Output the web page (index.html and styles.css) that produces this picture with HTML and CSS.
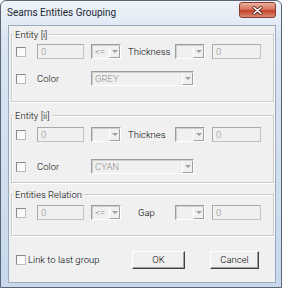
FILE: index.html
```html
<!DOCTYPE html>
<html lang="en">
<head>
    <meta charset="UTF-8">
    <title>Seams Entities Grouping</title>
    <link rel="stylesheet" href="styles.css">
</head>
<body>
    <div class="window">
        <div class="titlebar">
            <span class="title">Seams Entities Grouping</span>
            <span class="close">
                <svg width="11" height="9" viewBox="0 0 11 9">
                    <path d="M2 1.5 L9 7.5 M9 1.5 L2 7.5" stroke="#5a2a22" stroke-width="3" stroke-linecap="round"/>
                    <path d="M2 1.5 L9 7.5 M9 1.5 L2 7.5" stroke="#fff" stroke-width="1.6" stroke-linecap="round"/>
                </svg>
            </span>
        </div>
        <div class="client">
            <fieldset class="group group-a">
                <legend>Entity [i]</legend>
                <div class="rows">
                    <span class="check"></span>
                    <span class="edit">0</span>
                    <span class="combo"><span class="combo-text">&lt;=</span><span class="drop"></span></span>
                    <span class="label">Thickness</span>
                    <span class="combo"><span class="combo-text"></span><span class="drop"></span></span>
                    <span class="edit edit-wide">0</span>

                    <span class="check"></span>
                    <span class="label">Color</span>
                    <span class="combo combo-long"><span class="combo-text">GREY</span><span class="drop"></span></span>
                </div>
            </fieldset>

            <fieldset class="group group-b">
                <legend>Entity [ii]</legend>
                <div class="rows">
                    <span class="check"></span>
                    <span class="edit">0</span>
                    <span class="combo"><span class="combo-text"></span><span class="drop"></span></span>
                    <span class="label">Thicknes</span>
                    <span class="combo"><span class="combo-text"></span><span class="drop"></span></span>
                    <span class="edit edit-wide">0</span>

                    <span class="check"></span>
                    <span class="label">Color</span>
                    <span class="combo combo-long"><span class="combo-text">CYAN</span><span class="drop"></span></span>
                </div>
            </fieldset>

            <fieldset class="group group-c">
                <legend>Entities Relation</legend>
                <div class="rows">
                    <span class="check"></span>
                    <span class="edit">0</span>
                    <span class="combo"><span class="combo-text">&lt;=</span><span class="drop"></span></span>
                    <span class="label label-gap">Gap</span>
                    <span class="combo"><span class="combo-text"></span><span class="drop"></span></span>
                    <span class="edit edit-wide">0</span>
                </div>
            </fieldset>

            <div class="footer">
                <div class="link">
                    <span class="check"></span>
                    <span class="link-text">Link to last group</span>
                </div>
                <span class="button button-ok">OK</span>
                <span class="button button-cancel">Cancel</span>
            </div>
        </div>
    </div>
</body>
</html>
```

FILE: styles.css
```css
body {
    margin: 0;
    background-color: #ffffff;
    font-family: Roboto, "Liberation Sans", Arial, sans-serif;
    font-size: 9.5px;
    font-weight: 300;
    line-height: 11px;
    color: #000;
}
.window {
    box-sizing: border-box;
    width: 282px;
    height: 288px;
    display: flex;
    flex-direction: column;
    border: 1px solid #596775;
    border-radius: 6px 6px 0 0;
    background: linear-gradient(#eef3f9, #d9e5f2 40px, #c8d9ed);
}
.titlebar {
    height: 24px;
    display: flex;
    align-items: center;
    padding: 0 5px 0 6px;
}
.title {
    font-size: 10px;
    line-height: 12px;
    font-weight: 400;
    color: #1e2833;
}
.close {
    margin-left: auto;
    align-self: flex-start;
    margin-top: 1px;
    box-sizing: border-box;
    width: 37px;
    height: 16px;
    display: flex;
    align-items: center;
    justify-content: center;
    border: 1px solid #8a3a2c;
    border-radius: 3px;
    background: linear-gradient(#eab0a2, #d8735c 45%, #c2412a 55%, #dc8c74);
}
.client {
    flex: 1;
    margin: 0 5px 4px 7px;
    padding: 0 1px 0 2px;
    border: 1px solid #9aaabc;
    background-color: #f0f0f0;
}
.group {
    margin: 0;
    border: 1px solid #cbcbcb;
    box-shadow: 1px 1px 0 #fff, inset 1px 1px 0 #fff;
}
.group legend {
    margin-left: -3px;
    padding: 0 2px;
    height: 11px;
    line-height: 11px;
    background-color: #f0f0f0;
}
.group-a {
    margin-top: 3px;
    padding: 4px 0 15px 4px;
}
.group-b {
    margin-top: 8px;
    padding: 6px 0 8px 4px;
}
.group-c {
    margin-top: 6px;
    padding: 5px 0 15px 4px;
}
.rows {
    display: grid;
    grid-template-columns: 21px 54px 37px 47px 37px 49px;
    grid-auto-rows: 15px;
    align-items: start;
}
.group-a .rows {
    row-gap: 12px;
}
.group-b .rows {
    row-gap: 17px;
}
.label {
    height: 15px;
    line-height: 15px;
}
.check {
    box-sizing: border-box;
    width: 10px;
    height: 10px;
    border: 1px solid #8a8a8a;
    border-right-color: #bdbdbd;
    border-bottom-color: #bdbdbd;
    background: linear-gradient(135deg, #f4f4f4, #ffffff);
}
.rows .check {
    margin-top: 3px;
}
.edit {
    box-sizing: border-box;
    width: 47px;
    height: 15px;
    padding-left: 3px;
    line-height: 13px;
    color: #8c8c8c;
    border: 1px solid #c2c2c2;
    border-top-color: #a9a9a9;
    border-left-color: #a9a9a9;
}
.edit-wide {
    width: 49px;
}
.label-gap {
    margin-left: 10px;
}
.combo {
    box-sizing: border-box;
    width: 30px;
    height: 15px;
    display: flex;
    border: 1px solid #fff;
    border-top-color: #9c9c9c;
    border-left-color: #9c9c9c;
    box-shadow: inset 1px 1px 0 #d0d0d0;
}
.combo-long {
    grid-column: 3 / 6;
    width: 103px;
}
.combo-text {
    flex: 1;
    padding-left: 3px;
    line-height: 13px;
    color: #8c8c8c;
}
.drop {
    box-sizing: border-box;
    width: 11px;
    height: 12px;
    margin: 1px 0 0;
    display: flex;
    align-items: center;
    justify-content: center;
    border-left: 1px solid #fff;
    border-right: 1px solid #a0a0a0;
    border-bottom: 1px solid #a0a0a0;
    background-color: #f0f0f0;
}
.drop::after {
    content: "";
    border-left: 3px solid transparent;
    border-right: 3px solid transparent;
    border-top: 3px solid #a0a0a0;
}
.footer {
    display: flex;
    align-items: flex-start;
    height: 18px;
    margin-top: 15px;
    padding-left: 5px;
}
.link {
    margin-top: 3px;
    width: 116px;
    height: 12px;
    display: flex;
    align-items: flex-start;
}
.link .check {
    margin-top: 1px;
}
.link-text {
    margin-left: 2px;
    line-height: 12px;
}
.button {
    box-sizing: border-box;
    height: 18px;
    line-height: 16px;
    text-align: center;
    border: 1px solid #fff;
    border-right-color: #404040;
    border-bottom-color: #404040;
    box-shadow: inset -1px -1px 0 #a0a0a0;
}
.button-ok {
    width: 53px;
}
.button-cancel {
    width: 49px;
    margin-left: 25px;
}
```
